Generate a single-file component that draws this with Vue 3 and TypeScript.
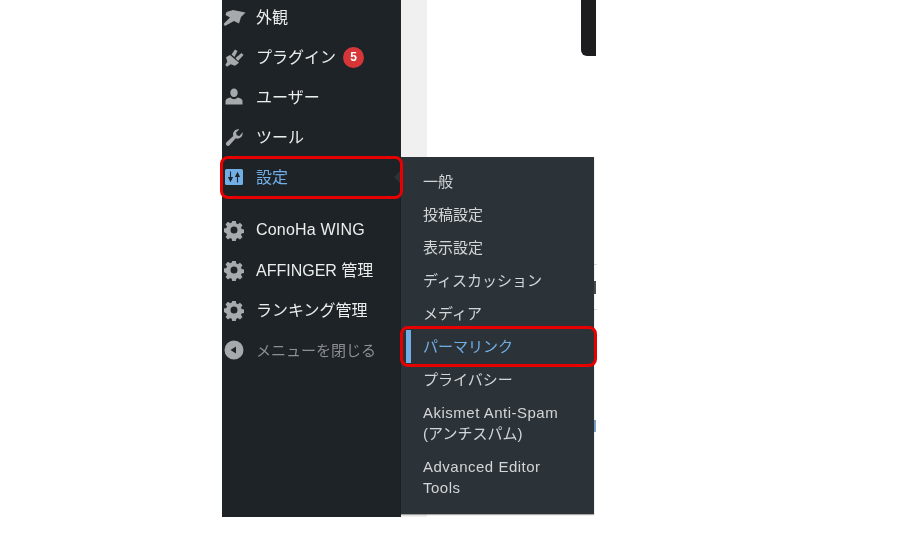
<script setup lang="ts">
interface MenuItem { label: string; icon: string; badge?: string; cls?: string }
const mainTop: MenuItem[] = [
  { label: '外観', icon: 'brush' },
  { label: 'プラグイン', icon: 'plug', badge: '5' },
  { label: 'ユーザー', icon: 'user' },
  { label: 'ツール', icon: 'wrench' },
]
const mainBottom: MenuItem[] = [
  { label: 'ConoHa WING', icon: 'gear', cls: 'plain' },
  { label: 'AFFINGER 管理', icon: 'gear' },
  { label: 'ランキング管理', icon: 'gear' },
  { label: 'メニューを閉じる', icon: 'collapse', cls: 'dim' },
]
const sub = ['一般', '投稿設定', '表示設定', 'ディスカッション', 'メディア']
</script>

<template>
  <div class="page">
    <nav class="sidebar">
      <ul class="menu">
        <li v-for="m in mainTop" :key="m.label" class="row">
          <svg class="icon" viewBox="0 0 20 20">
            <path v-if="m.icon === 'brush'" d="M2.500 5 9 3 21.500 5.500 17 10 15 16.500 10 14 1 19-.5 17 6 10.500 1.500 8Z" />
            <g v-else-if="m.icon === 'plug'">
              <path d="M6 8 15 15.700 11 18.700 6.700 17.300 3 19.700 1.300 18 3.300 14.700 2 10.300Z" />
              <path d="M7.500 7.500 11 2.500 13.500 4 10.500 10Z" />
              <path d="M11.500 11 17.500 6 19.500 8 14 14Z" />
            </g>
            <path v-else-if="m.icon === 'user'" d="M10 1.500c2.200 0 3.700 1.800 3.700 4.200S12.200 10 10 10 6.300 8.100 6.300 5.700 7.800 1.500 10 1.500ZM6.500 10.500c1 1.100 2.200 1.700 3.500 1.700s2.500-.6 3.500-1.700c2.800.5 5 1.800 5 3.500v3.500H1.500V14c0-1.700 2.200-3 5-3.500Z" />
            <path v-else d="M18.500 5.200c.4 1.800-.1 3.700-1.500 5-1.500 1.400-3.500 1.800-5.300 1.100L5.500 18.300c-.8.800-2.200.8-3-.1-.8-.8-.8-2.100 0-2.900l6.800-6.200c-.7-1.900-.2-4 1.300-5.400 1.300-1.300 3.100-1.800 4.800-1.400l-3.300 3.100.6 2.800 2.800.8Z" />
          </svg>
          <span class="label">{{ m.label }}</span>
          <span v-if="m.badge" class="badge">{{ m.badge }}</span>
        </li>
        <li class="row current">
          <svg class="icon" viewBox="0 0 20 20">
            <rect x="1" y="2" width="18" height="16" rx="1.500" fill="#72aee6" />
            <path d="M6.500 4.500v7M4.800 10.500 6.500 14l1.700-3.500ZM13.500 15.500v-7M11.800 9.500 13.500 6l1.700 3.500Z" fill="#1d2327" stroke="#1d2327" stroke-width="1.100" />
          </svg>
          <span class="label">設定</span>
          <span class="arrow"></span>
          <div class="flyout">
            <ul class="submenu">
              <li v-for="s in sub" :key="s" class="sub-row">{{ s }}</li>
              <li class="sub-row active">パーマリンク</li>
              <li class="sub-row">プライバシー</li>
              <li class="sub-row latin">Akismet Anti-Spam<br /><span class="cjk">(アンチスパム)</span></li>
              <li class="sub-row latin">Advanced Editor Tools</li>
            </ul>
          </div>
        </li>
      </ul>
      <ul class="menu lower">
        <li v-for="m in mainBottom" :key="m.label" class="row" :class="m.cls">
          <svg v-if="m.icon === 'gear'" class="icon" viewBox="0 0 20 20">
            <path fill-rule="evenodd" d="M8.200 1h3.600l.5 2.600 1.500.6 2.200-1.500 2.500 2.500-1.500 2.200.6 1.500 2.400.5v3.500l-2.400.5-.6 1.500 1.500 2.200-2.500 2.500-2.200-1.500-1.500.6-.5 2.300H8.200l-.5-2.300-1.500-.6-2.200 1.500-2.500-2.500 1.500-2.200-.6-1.500L0 11.900V8.400l2.400-.5.600-1.500-1.500-2.200L4 1.700l2.200 1.500 1.500-.6ZM10 6.600a3.500 3.500 0 1 0 0 7 3.500 3.500 0 0 0 0-7Z" />
          </svg>
          <svg v-else class="icon" viewBox="0 0 20 20">
            <path fill-rule="evenodd" d="M10 .5a9.500 9.500 0 1 1 0 19 9.500 9.500 0 0 1 0-19ZM12 6.500 6.500 10l5.500 3.500Z" />
          </svg>
          <span class="label">{{ m.label }}</span>
        </li>
      </ul>
    </nav>
    <div class="gutter"></div>
    <main class="content">
      <div class="black-tab"></div>
      <div class="peek">
        <i class="rule r1"></i>
        <i class="glyph"></i>
        <i class="rule r2"></i>
        <i class="blue"></i>
      </div>
    </main>
    <div class="mark mark-settings"></div>
    <div class="mark mark-link"></div>
  </div>
</template>

<style>
body { margin: 0; background: #fff; }
</style>

<style scoped>
.page {
  position: relative;
  display: flex;
  align-items: flex-start;
  width: 920px;
  height: 540px;
  padding-left: 222px;
  box-sizing: border-box;
  overflow: hidden;
  background: #fff;
  font-family: "Liberation Sans", "Noto Sans CJK JP", sans-serif;
  font-size: 15px;
  filter: blur(0.35px);
}
ul { list-style: none; margin: 0; padding: 0; }
.sidebar {
  position: relative;
  flex: none;
  width: 179px;
  height: 517px;
  background: #1d2327;
  color: #eceded;
}
.menu { margin-top: -3px; }
.menu.lower { margin-top: 13px; }
.row {
  display: flex;
  align-items: center;
  height: 40px;
  padding-left: 2px;
}
.icon {
  flex: none;
  width: 20px;
  height: 20px;
  fill: #a7aaad;
  overflow: visible;
}
.label {
  margin-left: 12px;
  padding-bottom: 2px;
  font-size: 16px;
  white-space: nowrap;
}
.plain .label { padding-bottom: 0; letter-spacing: 0.2px; }
.dim .label { font-size: 15px; }
.badge {
  width: 21px;
  height: 21px;
  margin-left: 7px;
  border-radius: 50%;
  background: #d63638;
  color: #fff;
  font-size: 12px;
  font-weight: 700;
  line-height: 21px;
  text-align: center;
}
.current { position: relative; color: #72aee6; }
.arrow {
  position: absolute;
  right: 0;
  top: 13px;
  border: 7px solid transparent;
  border-right-color: #2c3338;
  border-left-width: 0;
}
.dim { color: #8c8f94; }
.flyout {
  position: absolute;
  left: 179px;
  top: 0;
  width: 193px;
  height: 357px;
  padding-top: 8px;
  box-sizing: border-box;
  background: #2c3338;
  box-shadow: 0 1px 1px rgba(0, 0, 0, 0.35);
  color: #d3d5d7;
  z-index: 2;
}
.sub-row {
  padding: 6px 30px 6px 22px;
  line-height: 21px;
}
.sub-row.latin { letter-spacing: 0.5px; }
.sub-row .cjk { letter-spacing: 0; }
.sub-row.active {
  color: #72aee6;
  background: linear-gradient(#72aee6, #72aee6) 5px 0 / 5px 100% no-repeat;
}
.gutter {
  flex: none;
  width: 26px;
  height: 517px;
  background: #f0f0f1;
}
.content {
  position: relative;
  flex: 1;
  height: 517px;
}
.black-tab {
  width: 15px;
  height: 56px;
  margin-left: 154px;
  border-radius: 0 0 0 6px;
  background: #1d1d1f;
}
.peek {
  position: relative;
  width: 30px;
  margin-left: 140px;
}
.peek i { position: absolute; display: block; left: 27px; }
.r1 { top: 208px; width: 3px; height: 1px; background: #dcdcde; }
.r2 { top: 253px; width: 3px; height: 1px; background: #dcdcde; }
.glyph { top: 225px; width: 2px; height: 13px; background: #4a4d50; }
.blue { top: 364px; width: 2px; height: 12px; background: #7ea6c9; }
.mark {
  position: absolute;
  box-sizing: border-box;
  border: 3px solid #e60000;
  border-radius: 8px;
  z-index: 3;
}
.mark-settings { left: 220px; top: 156px; width: 183px; height: 43px; }
.mark-link { left: 400px; top: 326px; width: 197px; height: 41px; }
</style>
